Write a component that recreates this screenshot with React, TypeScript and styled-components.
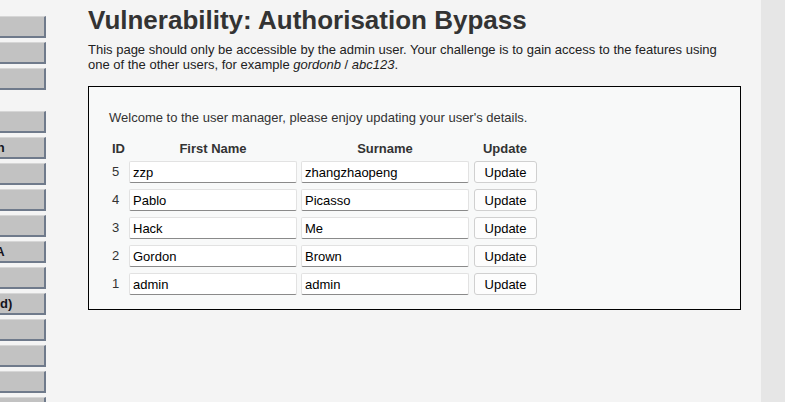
import React from 'react';
import styled, { createGlobalStyle } from 'styled-components';

const GlobalStyle = createGlobalStyle`
  html, body {
    margin: 0;
    padding: 0;
    background: #f4f4f4;
    font-family: 'Liberation Sans', Arial, sans-serif;
    font-size: 13px;
    color: #222;
  }
`;

const Page = styled.div`
  display: grid;
  grid-template-columns: 46px 1fr 24px;
  height: 100vh;
  overflow: hidden;
`;

const Menu = styled.nav`
  overflow: hidden;
  padding-top: 16px;
  display: flex;
  flex-direction: column;
  align-items: flex-end;
  gap: 21px;
`;

const MenuGroup = styled.ul`
  list-style: none;
  margin: 0;
  padding: 0;
  display: flex;
  flex-direction: column;
  align-items: flex-end;
  gap: 4px;
`;

const MenuItem = styled.li`
  flex: none;
  box-sizing: border-box;
  width: 172px;
  height: 22px;
  padding-left: 10px;
  display: flex;
  align-items: center;
  background: #c2c2c2;
  border-top: 1px solid #d6d6d6;
  border-right: 2px solid #6f7a8b;
  border-bottom: 2px solid #6f7a8b;
  font-weight: bold;
  font-size: 13px;
  color: #141420;
  white-space: nowrap;
`;

const Main = styled.main`
  padding: 5px 20px 0 42px;
`;

const Title = styled.h1`
  margin: 0;
  font-size: 26px;
  line-height: 30px;
  font-weight: bold;
  color: #333;
`;

const Intro = styled.p`
  margin: 7px 0 14px;
  line-height: 15px;
  color: #222;
`;

const CodeArea = styled.div`
  background: #f8f9f9;
  border: 1px solid #000;
  padding: 23px 20px 9px;
`;

const Welcome = styled.p`
  margin: 0 0 12px;
  line-height: 16px;
  color: #333;
`;

const Table = styled.table`
  border-spacing: 2px;
  font-size: 13px;
  color: #333;
`;

const Th = styled.th`
  padding: 1px;
  font-weight: bold;
  line-height: 16px;
  text-align: center;
`;

const Td = styled.td`
  padding: 1px;
  height: 24px;
  vertical-align: top;
  line-height: 22px;
`;

const TextField = styled.input`
  box-sizing: border-box;
  width: 168px;
  height: 22px;
  margin: 0;
  padding: 0 3px;
  border: 1px solid #e2e2e2;
  border-bottom: 1px solid #8a8a8a;
  border-radius: 2px;
  background: #fff;
  font-family: 'Liberation Sans', Arial, sans-serif;
  font-size: 13px;
  color: #000;
  outline: none;
`;

const UpdateButton = styled.button`
  box-sizing: border-box;
  width: 63px;
  height: 22px;
  margin: 0 0 0 1px;
  padding: 0;
  border: 1px solid #d0d0d0;
  border-radius: 3px;
  background: #fdfdfd;
  font-family: 'Liberation Sans', Arial, sans-serif;
  font-size: 13px;
  color: #000;
`;

const Gutter = styled.div`
  background: #e6e6e6;
`;

const menuGroups = [
  ['Home', 'Instructions', 'Setup / Reset DB'],
  [
    'Brute Force',
    'Command Injection',
    'CSRF',
    'File Inclusion',
    'File Upload',
    'Insecure CAPTCHA',
    'SQL Injection',
    'SQL Injection (Blind)',
    'Weak Session IDs',
    'XSS (DOM)',
    'XSS (Reflected)',
    'XSS (Stored)',
    'CSP Bypass',
    'JavaScript',
    'Authorisation Bypass',
  ],
];

const users = [
  { id: 5, first: 'zzp', last: 'zhangzhaopeng' },
  { id: 4, first: 'Pablo', last: 'Picasso' },
  { id: 3, first: 'Hack', last: 'Me' },
  { id: 2, first: 'Gordon', last: 'Brown' },
  { id: 1, first: 'admin', last: 'admin' },
];

export default function App() {
  return (
    <>
      <GlobalStyle />
      <Page>
        <Menu>
          {menuGroups.map((group, i) => (
            <MenuGroup key={i}>
              {group.map((label) => (
                <MenuItem key={label}>{label}</MenuItem>
              ))}
            </MenuGroup>
          ))}
        </Menu>
        <Main>
          <Title>Vulnerability: Authorisation Bypass</Title>
          <Intro>
            This page should only be accessible by the admin user. Your challenge is to gain access to the
            features using one of the other users, for example <i>gordonb</i> / <i>abc123</i>.
          </Intro>
          <CodeArea>
            <Welcome>Welcome to the user manager, please enjoy updating your user's details.</Welcome>
            <Table>
              <thead>
                <tr>
                  <Th>ID</Th>
                  <Th>First Name</Th>
                  <Th>Surname</Th>
                  <Th>Update</Th>
                </tr>
              </thead>
              <tbody>
                {users.map((u) => (
                  <tr key={u.id}>
                    <Td>{u.id}</Td>
                    <Td>
                      <TextField defaultValue={u.first} />
                    </Td>
                    <Td>
                      <TextField defaultValue={u.last} />
                    </Td>
                    <Td>
                      <UpdateButton type="button">Update</UpdateButton>
                    </Td>
                  </tr>
                ))}
              </tbody>
            </Table>
          </CodeArea>
        </Main>
        <Gutter />
      </Page>
    </>
  );
}
